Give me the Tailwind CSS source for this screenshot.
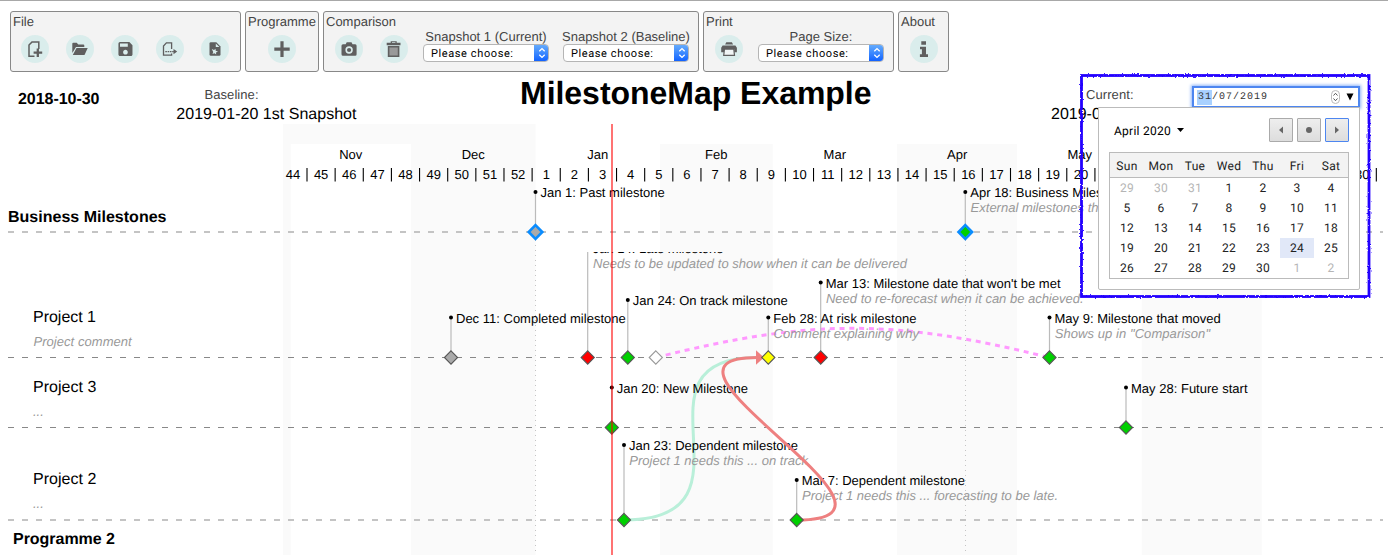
<!DOCTYPE html>
<html lang="en">
<head>
<meta charset="utf-8">
<title>MilestoneMap Example</title>
<script src="https://cdn.jsdelivr.net/npm/@tailwindcss/browser@4"></script>
</head>
<body class="relative flex h-[555px] w-[1388px] flex-col overflow-hidden bg-white font-['Liberation_Sans',Arial,sans-serif] [text-rendering:geometricPrecision]">

<!-- Toolbar -->
<header class="flex h-[72px] shrink-0 gap-1 border-t border-[#a8a8a8] pt-[10px] pl-[10px] text-[13px] text-[#444]">
  <section class="h-[61px] w-[231px] rounded-[3px] border border-[#888] bg-[#f3f3f3]">
    <h2 class="pl-[2px] leading-5">File</h2>
    <div class="mt-[3px] flex gap-[17px] pl-[10px]">
      <button class="size-7 rounded-full bg-[#daedec]"><svg viewBox="0 0 28 28" class="size-7" fill="none" stroke="#5f5f5f" stroke-width="1.500"><path d="M13.500 21.200H8V10l3-3.100h6.800v7"/><path d="M16.800 13.600v8.400M12.600 17.700h8.600" stroke-width="2.300"/></svg></button>
      <button class="size-7 rounded-full bg-[#daedec]"><svg viewBox="0 0 28 28" class="size-7" fill="#5f5f5f"><path d="M6.300 18V8.700a1 1 0 0 1 1-1h3.400l1.600 1.700h5a1 1 0 0 1 1 1V12H10z"/><path d="M6.800 20l3.700-7h11.200l-3.200 7z"/></svg></button>
      <button class="size-7 rounded-full bg-[#daedec]"><svg viewBox="0 0 28 28" class="size-7" fill="#5f5f5f"><path transform="translate(5.100 4.700) scale(.78)" d="M17 3H5a2 2 0 0 0-2 2v14c0 1.100.9 2 2 2h14c1.100 0 2-.9 2-2V7l-4-4zm-5 16c-1.660 0-3-1.340-3-3s1.340-3 3-3 3 1.340 3 3-1.340 3-3 3zm3-10H5V5h10v4z"/></svg></button>
      <button class="size-7 rounded-full bg-[#daedec]"><svg viewBox="0 0 28 28" class="size-7" fill="none" stroke="#5f5f5f" stroke-width="1.300"><path d="M15.600 14V7.900h-5.200L7.500 11v9.100h8.100v-1.500"/><path d="M9.300 16.600h8.500" stroke-dasharray="1.600 .7"/><path d="M17.500 14l3.700 2.600-3.700 2.600z" fill="#5f5f5f" stroke="none"/></svg></button>
      <button class="size-7 rounded-full bg-[#daedec]"><svg viewBox="0 0 28 28" class="size-7"><path fill="#5f5f5f" d="M9.800 7.300h5.500l4.200 4.200v8a1.300 1.300 0 0 1-1.300 1.300H9.800a1.300 1.300 0 0 1-1.300-1.300V8.600a1.300 1.300 0 0 1 1.300-1.300z"/><path fill="#daedec" d="M14.800 8.400v3.700h3.600zM10.800 14l2.200 1 1.500-1.300.2 2 2.300.8-2 1 .2 2-1.700-1.300-2 .7.700-2z"/></svg></button>
    </div>
  </section>
  <section class="h-[61px] w-[74px] rounded-[3px] border border-[#888] bg-[#f3f3f3]">
    <h2 class="pl-[2px] leading-5">Programme</h2>
    <div class="mt-[3px] flex pl-[22px]">
      <button class="size-7 rounded-full bg-[#daedec]"><svg viewBox="0 0 28 28" class="size-7" stroke="#5f5f5f" stroke-width="3.200"><path d="M14 6.300V22M6.300 14.100h15.400"/></svg></button>
    </div>
  </section>
  <section class="h-[61px] w-[376px] rounded-[3px] border border-[#888] bg-[#f3f3f3]">
    <h2 class="pl-[2px] leading-5">Comparison</h2>
    <div class="mt-[3px] flex pl-[10.500px]">
      <button class="size-7 rounded-full bg-[#daedec]"><svg viewBox="0 0 28 28" class="size-7"><path fill="#5f5f5f" d="M8 9.200h2.700l1-2h4.800l1 2H20a1.500 1.500 0 0 1 1.600 1.500v8.600a1.500 1.500 0 0 1-1.600 1.500H8a1.500 1.500 0 0 1-1.500-1.500v-8.600A1.500 1.500 0 0 1 8 9.200z"/><circle cx="14.100" cy="15" r="2.900" fill="#5f5f5f" stroke="#daedec" stroke-width="1.600"/></svg></button>
      <button class="ml-[17px] size-7 rounded-full bg-[#daedec]"><svg viewBox="0 0 28 28" class="size-7"><path fill="#5f5f5f" d="M10.700 6.200h6v1.600h3.800v2.500H6.700V7.800h4z"/><path fill="#daedec" d="M12 7.200h3.400v.7H12z"/><path fill="#999" stroke="#5f5f5f" stroke-width="1.600" d="M8.600 11.800h10v9.400h-10z"/></svg></button>
      <div class="-mt-[6px] ml-[15.500px] w-[126px]">
        <div class="text-center leading-[15px] whitespace-nowrap">Snapshot 1 (Current)</div>
        <div class="flex h-[18px] overflow-hidden rounded-[4px] border border-[#b5b5b5] bg-white"><span class="flex-1 pl-[7px] font-[Roboto] text-[11px] leading-[17px] tracking-[.6px] text-black">Please choose:</span><span class="-my-px -mr-px flex h-[18px] w-[15px] items-center justify-center bg-linear-to-b from-[#69aefb] to-[#0b5cff]"><svg viewBox="0 0 8 12" class="h-3 w-2" fill="none" stroke="#fff" stroke-width="1.300"><path d="M1.300 4.300L4 1.600l2.700 2.700M1.300 7.700L4 10.400l2.700-2.700"/></svg></span></div>
      </div>
      <div class="-mt-[6px] ml-[14px] w-[126px]">
        <div class="-ml-px text-center leading-[15px] whitespace-nowrap">Snapshot 2 (Baseline)</div>
        <div class="flex h-[18px] overflow-hidden rounded-[4px] border border-[#b5b5b5] bg-white"><span class="flex-1 pl-[7px] font-[Roboto] text-[11px] leading-[17px] tracking-[.6px] text-black">Please choose:</span><span class="-my-px -mr-px flex h-[18px] w-[15px] items-center justify-center bg-linear-to-b from-[#69aefb] to-[#0b5cff]"><svg viewBox="0 0 8 12" class="h-3 w-2" fill="none" stroke="#fff" stroke-width="1.300"><path d="M1.300 4.300L4 1.600l2.700 2.700M1.300 7.700L4 10.400l2.700-2.700"/></svg></span></div>
      </div>
    </div>
  </section>
  <section class="h-[61px] w-[191px] rounded-[3px] border border-[#888] bg-[#f3f3f3]">
    <h2 class="pl-[2px] leading-5">Print</h2>
    <div class="mt-[3px] flex pl-[10.500px]">
      <button class="size-7 rounded-full bg-[#daedec]"><svg viewBox="0 0 28 28" class="size-7"><path fill="#5f5f5f" d="M11.300 7.200h5.600l1.200 2.300h-8zM7.600 10.500h12.800l1.500 2.200v4.600h-2.700v-3.200H9v3.200H6.200v-4.600z"/><path fill="#f0f5f5" stroke="#5f5f5f" stroke-width="1.200" d="M9.500 14.200h9.300l.7 6.200H8.700z"/></svg></button>
      <div class="-mt-[6px] ml-[15.500px] w-[126px]">
        <div class="text-center leading-[15px]">Page Size:</div>
        <div class="flex h-[18px] overflow-hidden rounded-[4px] border border-[#b5b5b5] bg-white"><span class="flex-1 pl-[7px] font-[Roboto] text-[11px] leading-[17px] tracking-[.6px] text-black">Please choose:</span><span class="-my-px -mr-px flex h-[18px] w-[15px] items-center justify-center bg-linear-to-b from-[#69aefb] to-[#0b5cff]"><svg viewBox="0 0 8 12" class="h-3 w-2" fill="none" stroke="#fff" stroke-width="1.300"><path d="M1.300 4.300L4 1.600l2.700 2.700M1.300 7.700L4 10.400l2.700-2.700"/></svg></span></div>
      </div>
    </div>
  </section>
  <section class="h-[61px] w-[51px] rounded-[3px] border border-[#888] bg-[#f3f3f3]">
    <h2 class="pl-[2px] leading-5">About</h2>
    <div class="mt-[3px] flex pl-[10.500px]">
      <button class="size-7 rounded-full bg-[#daedec]"><svg viewBox="0 0 28 28" class="size-7" fill="#5f5f5f"><path d="M11.300 6.200h4.700v3.600h-4.700zM10 11.700h6v7.600h2v2.700H9.900v-2.700h2v-5H10z"/></svg></button>
    </div>
  </section>
</header>

<!-- Milestone map -->
<main class="h-[483px] shrink-0"><svg id="map" viewBox="0 72 1388 483" class="block h-[483px] w-[1388px]"></svg></main>

<!-- Annotation frame -->
<svg viewBox="0 0 300 236" class="pointer-events-none absolute top-[68px] left-[1075px] h-[236px] w-[300px]">
  <filter id="rough" x="-5%" y="-5%" width="110%" height="110%"><feTurbulence type="fractalNoise" baseFrequency=".45" numOctaves="2" seed="4"/><feDisplacementMap in="SourceGraphic" scale="2.600" xChannelSelector="R" yChannelSelector="G"/></filter>
  <rect x="6.500" y="7.500" width="287.500" height="221" fill="none" stroke="#2200ff" stroke-width="2.800" filter="url(#rough)"/>
</svg>

<!-- Date field -->
<div class="absolute top-[86px] left-[1192px] flex h-[22px] w-[168px] items-center border-2 border-[#4d86f0] bg-white pl-[3px] font-['Liberation_Mono',monospace] text-[10px] leading-[15px] text-[#333] shadow-[0_0_3px_1px_#8db4f8]">
  <span class="bg-[#a9d1ff] pl-px tracking-[1px]">31</span><span class="tracking-[1px]">/07/2019</span>
  <svg viewBox="0 0 9 14" class="ml-auto h-[14px] w-[9px]"><rect x=".5" y=".5" width="8" height="13" rx="4" fill="#fff" stroke="#bbb"/><path d="M2.500 5.500L4.500 3.300l2 2.200M2.500 8.500l2 2.200 2-2.200" fill="none" stroke="#555"/></svg>
  <svg viewBox="0 0 8 8" class="mr-[4px] ml-[6px] size-2"><path d="M.5 .5h7L4 7.500z"/></svg>
</div>

<!-- Calendar popup -->
<div class="absolute top-[107px] left-[1098px] h-[183px] w-[262px] rounded-b-[2px] border border-[#bbb] bg-white px-[10px] pt-[10px] font-[Roboto] text-[12px] text-[#222]">
  <div class="flex h-6 items-center gap-1 pl-[5px]">
    <span class="pt-px tracking-[.25px] text-black">April 2020</span>
    <svg viewBox="0 0 7 4" class="ml-[2px] h-1 w-[7px]"><path d="M0 0h7L3.500 4z"/></svg>
    <button class="ml-auto flex size-6 items-center justify-center rounded-[1px] border border-[#aaa] bg-linear-to-b from-[#eee] to-[#ddd]"><svg viewBox="0 0 4 8" class="h-2 w-1" fill="#666"><path d="M4 .5v7L0 4z"/></svg></button>
    <button class="flex size-6 items-center justify-center rounded-[1px] border border-[#aaa] bg-linear-to-b from-[#eee] to-[#ddd]"><span class="size-[6px] rounded-full bg-[#666]"></span></button>
    <button class="flex size-6 items-center justify-center rounded-[1px] border border-[#4d86f0] bg-linear-to-b from-[#eee] to-[#ddd]"><svg viewBox="0 0 4 8" class="h-2 w-1" fill="#666"><path d="M0 .5v7L4 4z"/></svg></button>
  </div>
  <div class="mt-[10px] w-[240px] border border-[#bbb] text-center tracking-[.3px]">
    <div class="grid h-[25px] grid-cols-7 border-b border-[#bbb] bg-[#f3f3f3] leading-[26px]"><span>Sun</span><span>Mon</span><span>Tue</span><span>Wed</span><span>Thu</span><span>Fri</span><span>Sat</span></div>
    <div id="days" class="grid grid-cols-7 leading-5"></div>
  </div>
</div>

<script>
const days = document.getElementById('days');
[29, 30, 31, ...Array.from({length: 30}, (_, i) => i + 1), 1, 2].forEach((d, i) => {
  const s = document.createElement('span');
  s.textContent = d;
  s.className = i < 3 || i > 32 ? 'h-5 text-[#b5b5b5]' : i === 26 ? 'h-5 bg-[#e1e8f8]' : 'h-5';
  days.append(s);
});

let out = '';
const rect = (x, y, w, h, f) => out += `<rect x="${x}" y="${y}" width="${w}" height="${h}" fill="${f}"/>`;
// x2 gives the right edge of the label, when it is fitted to a width
const text = (s, x, x2, y, size = 13, extra = '') =>
  out += `<text x="${x}" y="${y}" font-size="${size}" ${x2 ? `textLength="${x2 - x}"` : ''} ${extra}>${s}</text>`;
const note = 'font-style="italic" fill="#999"';
const bold = 'font-weight="bold"';

// Month bands
rect(283, 124, 252.5, 431, '#fafafa');
rect(290.7, 144, 120.3, 411, '#fff');
rect(660, 144, 112.7, 411, '#fafafa');
rect(897, 144, 120, 411, '#fafafa');
rect(1141.7, 144, 120, 411, '#fafafa');

// Project lanes
[[232, 2, '#c4c4c4'], [357.5, 1, '#888'], [427.5, 1, '#888'], [520, 2, '#c4c4c4']].forEach(([y, w, c]) =>
  out += `<path d="M8 ${y}H1383" stroke="${c}" stroke-width="${w}" stroke-dasharray="6 8"/>`);
[535.5, 965.5].forEach(x => out += `<path d="M${x} 240V555" stroke="#c4c4c4" stroke-dasharray="1 4"/>`);

// Months and weeks
[['Nov', 350.8], ['Dec', 473.3], ['Jan', 597.7], ['Feb', 716.3], ['Mar', 834.8], ['Apr', 957.2], ['May', 1079.7]].forEach(([m, x]) =>
  out += `<text x="${x}" y="159" font-size="13" text-anchor="middle">${m}</text>`);
for (let i = 0; i < 39; i++) {
  const x = 307 + i * 28.14, n = i < 9 ? 44 + i : i - 8;
  // the open calendar hides this stretch
  if (x > 1110 && x < 1360) continue;
  out += `<path d="M${x} 168V181.500" stroke="#000" stroke-width="1.100"/>`;
  out += `<text x="${x - 14}" y="179" font-size="13" text-anchor="middle">${n}</text>`;
}

// Headings
text('MilestoneMap Example', 520, 871.5, 104, 32, bold);
text('2018-10-30', 18, 99.5, 104, 16, bold);
text('Baseline:', 204.5, 258.5, 99, 13, 'fill="#444"');
text('2019-01-20 1st Snapshot', 176.3, 356.5, 119, 16);
text('Current:', 1086, 1133.5, 99, 13, 'fill="#444"');
text('2019-07', 1051, 0, 119, 16);
text('Business Milestones', 8, 166.5, 222, 16, bold);
text('Project 1', 33, 96, 322, 16);
text('Project comment', 33.5, 131.7, 346, 13, note);
text('Project 3', 33, 96.3, 392, 16);
text('...', 33, 0, 416, 13, note);
text('Project 2', 33, 96.3, 484, 16);
text('...', 33, 0, 508, 13, note);
text('Programme 2', 13, 115, 544, 16, bold);

// Moved milestone and dependencies
out += '<path d="M656 357.500C811 318.600 894 318.600 1049 357.500" fill="none" stroke="#ff99ff" stroke-width="3" stroke-dasharray="5 4.800"/>';
out += '<path d="M624 520C769 520 620 357.500 757 357.500" fill="none" stroke="#b9efd9" stroke-width="3"/>';

// [x, lane y, head y, fill, label, label right, comment, comment right]
const stones = [
  [535.5, 232, 192, '#aaa', 'Jan 1: Past milestone', 664.7],
  [965.3, 232, 192, '#00d000', 'Apr 18: Business Milestone', 0, 'External milestones that', 0],
  [587.7, 357.5, 247.5, '#f00', 'Jan 14: Late milestone', 723.5, 'Needs to be updated to show when it can be delivered', 907],
  [627.8, 357.5, 300, '#00d000', 'Jan 24: On track milestone', 787.7],
  [451, 357.5, 317.5, '#aaa', 'Dec 11: Completed milestone', 625.7],
  [820.7, 357.5, 282.5, '#f00', "Mar 13: Milestone date that won't be met", 1060.5, 'Need to re-forecast when it can be achieved.', 1083.5],
  [768.3, 357.5, 317.5, '#ff0', 'Feb 28: At risk milestone', 916.5, 'Comment explaining why', 919],
  [1049.5, 357.5, 317.5, '#00d000', 'May 9: Milestone that moved', 1220.7, 'Shows up in "Comparison"', 1210],
  [611.8, 427.5, 387.5, '#00d000', 'Jan 20: New Milestone', 748],
  [1126, 427.5, 387.5, '#00d000', 'May 28: Future start', 1247.5],
  [624, 520, 445, '#00d000', 'Jan 23: Dependent milestone', 798, 'Project 1 needs this ... on track', 808],
  [796.7, 520, 480, '#00d000', 'Mar 7: Dependent milestone', 965, 'Project 1 needs this ... forecasting to be late.', 1058],
];
out += '<clipPath id="late"><rect x="560" y="252" width="400" height="120"/></clipPath>';
stones.forEach(([x, y, h, fill, label, lr, comment, cr], i) => {
  if (i === 2) out += '<g clip-path="url(#late)">';
  out += `<path d="M${x} ${h}V${y}" stroke="#bbb" stroke-width="1.200"/><circle cx="${x}" cy="${h}" r="2"/>`;
  text(label, x + 5, lr, h + 5.2);
  if (comment) text(comment, x + 5.300, cr, h + 20.3, 13, note);
  if (i === 2) out += '</g>';
});
out += '<path d="M797 520C941 520 622 357.500 757 357.500" fill="none" stroke="#ee8080" stroke-width="3"/><path d="M756 350.300v14.400l8-7.200z" fill="#ee8080"/>';
const diamond = (x, y, r, fill, stroke, w) =>
  out += `<path d="M${x} ${y - r}l${r} ${r}l${-r} ${r}l${-r} ${-r}z" fill="${fill}" stroke="${stroke}" stroke-width="${w}"/>`;
stones.forEach(([x, y, , fill]) => y === 232 ? diamond(x, y, 6.8, fill, '#0a8cff', 2.6) : diamond(x, y, 6.6, fill, '#555', 1.1));
diamond(655.8, 357.5, 6.6, '#fff', '#999', 1.1);

// Today
out += '<path d="M612 124V555" stroke="#ff0000" stroke-opacity=".55" stroke-width="2"/>';
document.getElementById('map').innerHTML = out;
</script>
</body>
</html>
